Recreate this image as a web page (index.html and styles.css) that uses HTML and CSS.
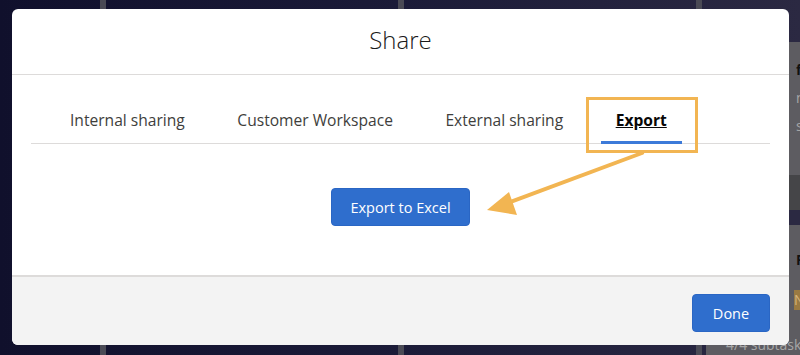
FILE: index.html
```html
<!DOCTYPE html>
<html lang="en">
<head>
    <meta charset="UTF-8">
    <meta name="viewport" content="width=device-width, initial-scale=1.0">
    <title>Share</title>
    <link rel="stylesheet" href="styles.css">
</head>
<body>
    <div class="board">
        <div class="board-col"></div>
        <div class="board-col"></div>
        <div class="board-col board-col-last">
            <div class="side-panel">
                <div class="side-line side-bold">fi</div>
                <div class="side-line">nt</div>
                <div class="side-line">sk</div>
                <div class="side-block"></div>
                <div class="side-gap"></div>
                <div class="side-line side-bold">F</div>
                <div class="side-badge">N</div>
                <div class="side-foot">4/4 subtasks</div>
            </div>
        </div>
    </div>

    <div class="modal">
        <div class="modal-header">
            <h2>Share</h2>
        </div>

        <div class="modal-body">
            <ul class="tabs">
                <li class="tab">Internal sharing</li>
                <li class="tab">Customer Workspace</li>
                <li class="tab">External sharing</li>
                <li class="tab tab-active">
                    <span>Export</span>
                    <div class="highlight-box"></div>
                </li>
            </ul>

            <div class="export-area">
                <button class="btn btn-brand">Export to Excel</button>
            </div>

            <!-- annotation arrow pointing at the export button -->
            <svg class="arrow" width="170" height="70" viewBox="0 0 170 70">
                <line x1="156" y1="2" x2="22" y2="52" stroke="#f2b552" stroke-width="4" stroke-linecap="round"/>
                <polygon points="1,59 23,41 31,64" fill="#f2b552"/>
            </svg>
        </div>

        <div class="modal-footer">
            <button class="btn btn-brand btn-done">Done</button>
        </div>
    </div>
</body>
</html>
```

FILE: styles.css
```css
* {
    margin: 0;
    padding: 0;
    box-sizing: border-box;
}

body {
    font-family: "Open Sans", "Liberation Sans", sans-serif;
    background: linear-gradient(90deg, #10102c 0%, #1b1b38 50%, #2b2942 100%);
    width: 800px;
    height: 355px;
    overflow: hidden;
    position: relative;
    padding: 9px 11px 10px 12px;
}

/* board behind the modal */
.board {
    position: absolute;
    inset: 0;
    display: flex;
    padding-left: 100px;
}

.board-col {
    flex-shrink: 0;
    width: 298px;
    height: 100%;
    border-left: 6px solid #4a4a55;
}

.board-col-last {
    flex: 1;
    display: flex;
    flex-direction: column;
    padding-top: 42px;
}

.side-panel {
    flex: 1;
    background: #5d5c61;
    margin-left: 4px;
    padding: 14px 0 0 90px;
    color: #a6a6a6;
    font-size: 14px;
    overflow: hidden;
    white-space: nowrap;
}

.side-line {
    height: 28px;
    line-height: 28px;
}

.side-bold {
    color: #111;
    font-weight: 700;
}

.side-block {
    height: 35px;
    background: #454548;
    margin: 35px 0 0 -90px;
}

.side-gap {
    height: 15px;
    background: #2b2942;
    margin: 0 0 21px -90px;
}

.side-badge {
    background: #9a7a42;
    color: #d6b47a;
    height: 20px;
    line-height: 20px;
    margin: 16px 0 0 -2px;
}

.side-foot {
    margin: 26px 0 0 -70px;
    line-height: 18px;
}

/* modal */
.modal {
    position: relative;
    background: #ffffff;
    border-radius: 6px;
    height: 336px;
    display: flex;
    flex-direction: column;
    overflow: hidden;
}

.modal-header {
    height: 66px;
    border-bottom: 1px solid #dddbda;
    display: flex;
    align-items: center;
    justify-content: center;
    padding-bottom: 4px;
}

.modal-header h2 {
    font-size: 24px;
    font-weight: 300;
    color: #1a1a1a;
}

.modal-body {
    position: relative;
    flex: 1;
    padding: 22px 19px 0;
}

.tabs {
    list-style: none;
    display: flex;
    gap: 22.5px;
    padding-left: 24px;
    border-bottom: 1px solid #dddbda;
    height: 47px;
}

.tab {
    position: relative;
    padding: 0 15px;
    height: 47px;
    line-height: 46px;
    font-size: 15.6px;
    color: #3e3e3c;
}

.tab-active {
    color: #080707;
    font-weight: 700;
    text-decoration: underline;
    border-bottom: 3px solid #3c7ad9;
}

.highlight-box {
    position: absolute;
    left: -15px;
    top: 0;
    width: 112px;
    height: 56px;
    border: 3px solid #f2b552;
}

.export-area {
    display: flex;
    justify-content: center;
    padding-top: 44px;
}

.btn {
    font-family: "Open Sans", "Liberation Sans", sans-serif;
    font-size: 14.5px;
    border-radius: 4px;
    cursor: pointer;
}

.btn-brand {
    background: #2f6ecd;
    border: 1px solid #2a66c4;
    color: #ffffff;
    height: 38px;
    width: 139px;
}

.arrow {
    position: absolute;
    left: 474px;
    top: 76px;
}

.modal-footer {
    height: 70px;
    background: #f3f3f3;
    border-top: 2px solid #dddbda;
    display: flex;
    justify-content: flex-end;
    padding: 17px 19px 0 0;
}

.btn-done {
    width: 78px;
}
```
